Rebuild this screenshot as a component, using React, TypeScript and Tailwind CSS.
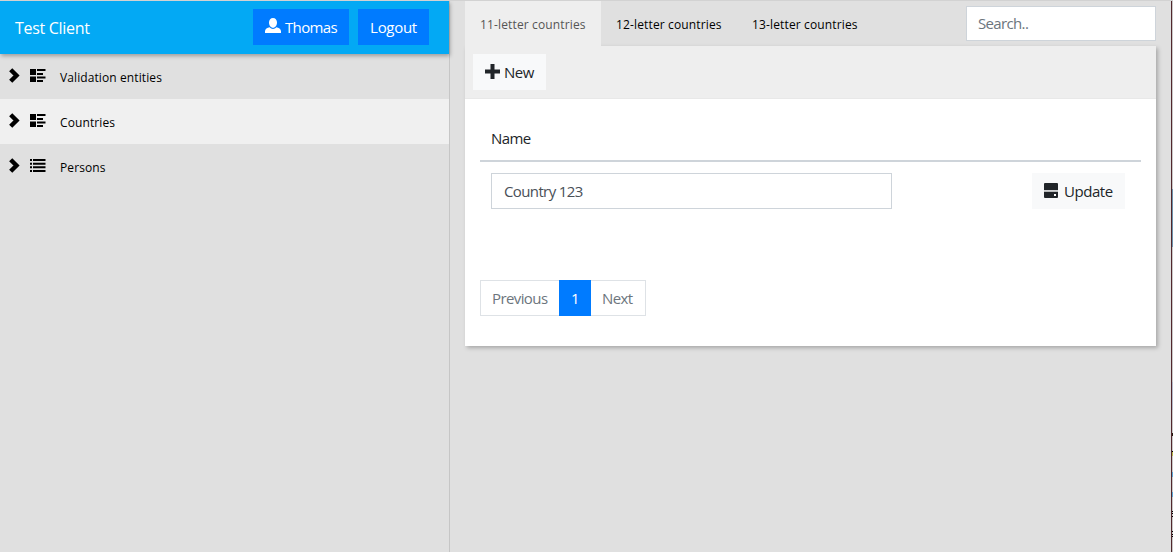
import React from "react";

const Chevron = () => (
  <svg className="-mt-[2px] h-[15px] w-[11px] shrink-0" viewBox="0 0 11 15" fill="none" stroke="#000" strokeWidth="4.4">
    <path d="M1.700 1.700 7.500 7.500 1.700 13.300" />
  </svg>
);

const ThumbList = () => (
  <svg className="h-[14px] w-[16px] shrink-0" viewBox="0 0 16 14" fill="#000">
    <path d="M0 0h6v6H0zM0 7.500h6v5.500H0zM7 0h8.500v2H7zM7 4h6v2H7zM7 7.500h8.500v2H7zM7 11h6v2H7z" />
  </svg>
);

const List = () => (
  <svg className="h-[14px] w-[16px] shrink-0" viewBox="0 0 16 14" fill="#000">
    <path d="M0 0h2v2H0zM3 0h12.500v2H3zM0 3.700h2v2H0zM3 3.700h12.500v2H3zM0 7.300h2v2H0zM3 7.300h12.500v2H3zM0 11h2v2H0zM3 11h12.500v2H3z" />
  </svg>
);

const User = () => (
  <svg className="-mt-[2px] h-4 w-4 shrink-0" viewBox="0 0 16 16" fill="#fff">
    <path d="M8 0C5.700 0 4 1.800 4 4.500 4 7.300 5.700 9.800 8 9.800s4-2.500 4-5.300C12 1.800 10.300 0 8 0z" />
    <path d="M4.700 9.300C2.200 9.700 0 11 0 13.200V15h16v-1.800c0-2.200-2.200-3.500-4.700-3.900C10.400 10.400 9.200 11 8 11s-2.400-.6-3.300-1.700z" />
  </svg>
);

const Plus = () => (
  <svg className="-mt-[2px] h-[15px] w-[15px] shrink-0" viewBox="0 0 15 15" fill="#212529">
    <path d="M5.500 0h4v5.500H15v4H9.500V15h-4V9.500H0v-4h5.500z" />
  </svg>
);

const Drive = () => (
  <svg className="-mt-[2px] h-[15px] w-[14px] shrink-0" viewBox="0 0 14 15" fill="#212529">
    <path d="M.5 0h13l.5 1v6H0V1zM0 9h14v5l-.5 1H.5L0 14z" />
    <path d="M0 7.700h14v.8H0z" fillOpacity=".6" />
    <path d="M10 11h2v2h-2z" fill="#fff" />
  </svg>
);

const navItems = [
  { label: "Validation entities", icon: <ThumbList />, active: false },
  { label: "Countries", icon: <ThumbList />, active: true },
  { label: "Persons", icon: <List />, active: false },
];

const tabs = [
  { label: "11-letter countries", active: true },
  { label: "12-letter countries", active: false },
  { label: "13-letter countries", active: false },
];

export default function App() {
  return (
    <div className="flex h-[552px] w-[1173px] overflow-hidden border-t border-[#d2d2d2] bg-[#e0e0e0] font-['Open_Sans','Noto_Sans',sans-serif] text-[15px] text-[#212529]">
      <aside className="w-[450px] shrink-0 border-r border-[#c6c6c6]">
        <header className="relative flex h-[53px] items-center bg-[#03a9f4] pr-5 pb-px pl-[15px] text-white shadow-[1px_2px_4px_rgba(0,0,0,0.3)]">
          <h1 className="mr-auto pt-px text-[16px] tracking-[-0.3px]">Test Client</h1>
          <button className="flex h-9 w-24 items-center bg-[#007bff] pl-3">
            <User />
            <span className="ml-[4px] tracking-[-0.65px]">Thomas</span>
          </button>
          <button className="ml-[9px] h-9 w-[71px] bg-[#007bff] tracking-[-0.3px]">Logout</button>
        </header>
        <nav>
          {navItems.map((item) => (
            <a key={item.label} className={`flex h-[45px] items-center pl-[9px] text-black ${item.active ? "bg-[#f0f0f0]" : ""}`}>
              <Chevron />
              <span className="-mt-px ml-[10px]">{item.icon}</span>
              <span className="ml-[14px] pt-[2px] text-[12px] tracking-[0.1px]">{item.label}</span>
            </a>
          ))}
        </nav>
      </aside>

      <main className="w-[721px] shrink-0 px-[15px]">
        <div className="flex h-[45px]">
          {tabs.map((tab) => (
            <div
              key={tab.label}
              className={`flex w-[136px] items-center pt-[2px] pl-[15px] text-[12px] tracking-[0.14px] whitespace-nowrap ${tab.active ? "bg-[#eee] text-[#555]" : "text-black"}`}
            >
              {tab.label}
            </div>
          ))}
          <input
            placeholder="Search.."
            className="mt-[5px] ml-auto h-[35px] w-[190px] border border-[#ced4da] bg-white px-[11px] pb-px text-[15px] tracking-[-0.65px] placeholder:text-[#6c757d]"
          />
        </div>
        <section className="h-[300px] bg-white shadow-[2px_2px_4px_rgba(0,0,0,0.25)]">
          <div className="flex h-[53px] items-center border-b border-[#e8e8e8] bg-[#eee] pl-2">
            <button className="flex h-9 w-[73px] items-center bg-[#f8f9fa] pl-3">
              <Plus />
              <span className="ml-[4px] tracking-[-0.5px]">New</span>
            </button>
          </div>
          <div className="px-[15px] pt-[15px]">
            <div className="flex h-12 items-center border-b-2 border-[#ced4da] pt-[2px] pl-[11px] tracking-[-0.55px]">Name</div>
            <div className="flex items-center justify-between pt-[11px] pr-4 pl-[11px]">
              <input
                defaultValue="Country 123"
                className="h-9 w-[401px] border border-[#ced4da] px-3 tracking-[-0.62px] text-[#495057]"
              />
              <button className="flex h-9 w-[93px] items-center bg-[#f8f9fa] pl-3">
                <Drive />
                <span className="ml-[6px] tracking-[-0.45px]">Update</span>
              </button>
            </div>
            <div className="mt-[71px] flex h-9 w-[166px] border border-[#dee2e6] tracking-[-0.6px] text-[#6c757d]">
              <button className="w-[78px] pl-[11px] text-left">Previous</button>
              <button className="-my-px w-8 bg-[#007bff] text-white">1</button>
              <button className="w-[54px] pl-[11px] text-left">Next</button>
            </div>
          </div>
        </section>
      </main>

      <div className="flex w-[2px] flex-col border-l border-[#51282d] bg-[#c9c9c9]">
        <div className="mt-[188px] h-[58px] bg-[#6d94ad]" />
        <div className="mt-[135px] h-[28px] bg-[#b4bccb]" />
        <div className="mt-[23px] h-[3px] bg-[#20180c]" />
        <div className="mt-[15px] h-px bg-black" />
        <div className="h-1 bg-[#b8b64c]" />
        <div className="mt-[16px] h-[5px] bg-[#5ba6d4]" />
        <div className="mt-[15px] h-[5px] bg-[#5ba6d4]" />
        <div className="mt-[14px] h-px bg-black" />
        <div className="mt-px h-px bg-black" />
        <div className="mt-[2px] h-px bg-black" />
        <div className="mt-[14px] h-px bg-black" />
        <div className="mt-[2px] h-px bg-black" />
        <div className="mt-px h-px bg-black" />
      </div>
    </div>
  );
}
